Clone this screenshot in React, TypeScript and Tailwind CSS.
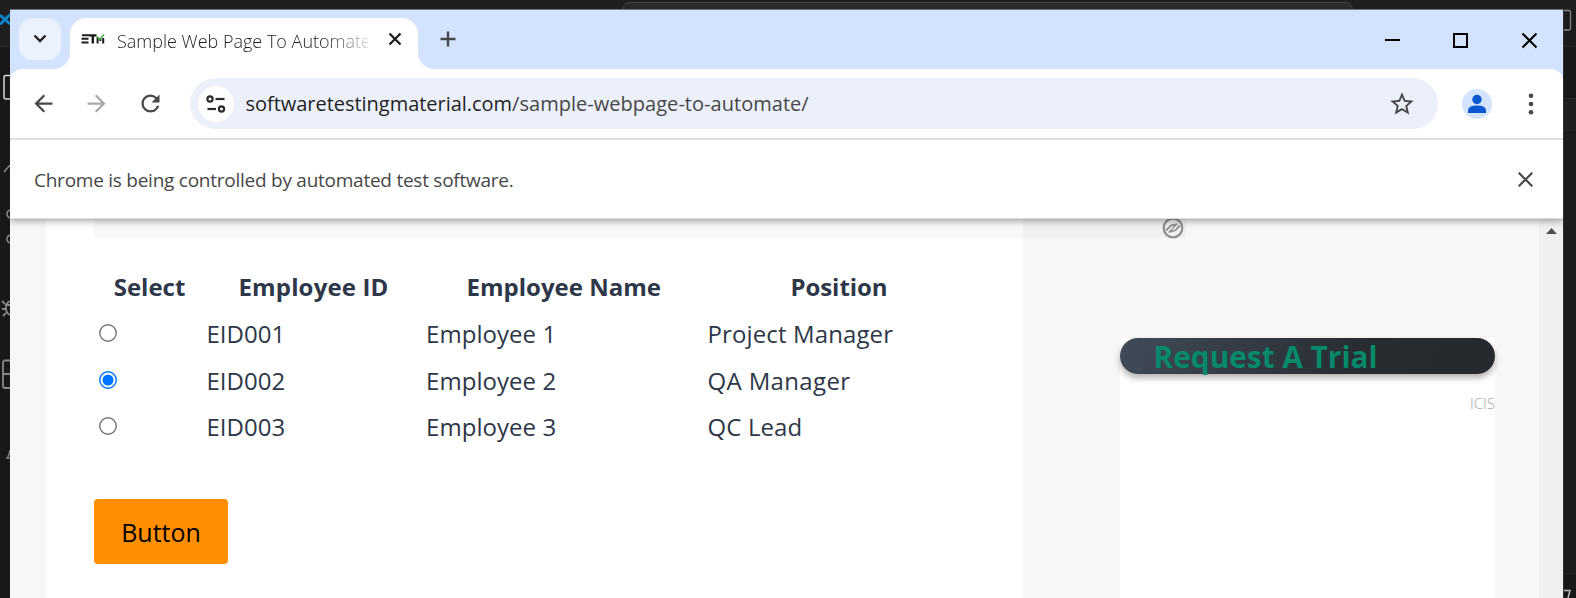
import { MdArrowBack, MdArrowForward, MdRefresh, MdStarBorder } from "react-icons/md";

type Row = { id: string; name: string; position: string; checked?: boolean };

const rows: Row[] = [
  { id: "EID001", name: "Employee 1", position: "Project Manager" },
  { id: "EID002", name: "Employee 2", position: "QA Manager", checked: true },
  { id: "EID003", name: "Employee 3", position: "QC Lead" },
];

function EditorLeftStrip() {
  return (
    <svg width="10" height="589" viewBox="0 9 10 589" fill="none">
      <rect y="9" width="10" height="37" fill="#1f1f1f" />
      <path d="M0 46.5H10" stroke="#2b2b2b" />
      <path d="M0 15L10 24M0 24.5L10 14.5" stroke="#0a84cc" strokeWidth="3" />
      <path d="M10 75.5H6a2 2 0 0 0-2 2V97a2 2 0 0 0 2 2h4" stroke="#d7d7d7" strokeWidth="1.5" />
      <path d="M4 172L10 165" stroke="#868686" strokeWidth="1.5" />
      <path d="M10 210q-3 1-3 4t3 4M10 235q-3 1-3 4t3 4" stroke="#868686" strokeWidth="1.5" />
      <path d="M10 301q-4 2-4 7t4 7M2 301l3 3M2 309h4M3 316l3-3M10 305H5" stroke="#868686" strokeWidth="1.8" />
      <path d="M10 360.5H5a2 2 0 0 0-2 2V386a2 2 0 0 0 2 2h5M3 374H10" stroke="#868686" strokeWidth="1.8" />
      <path d="M10 450q-1 6-3 8h3" stroke="#868686" strokeWidth="1.5" />
    </svg>
  );
}

function EditorRightStrip() {
  return (
    <svg width="13" height="589" viewBox="0 9 13 589" fill="none">
      <rect y="9" width="13" height="589" fill="#1c1c1c" />
      <rect y="46" width="13" height="52" fill="#181818" />
      <rect y="98" width="13" height="34" fill="#1f1f1f" />
      <path d="M0 46.5H13M0 98.5H13M0 573.5H13" stroke="#2b2b2b" />
      <path d="M0 132.5H13" stroke="#141414" />
      <rect y="574" width="13" height="24" fill="#181818" />
      <path d="M0 10.5H6a1.5 1.5 0 0 1 1.5 1.5V28.5a1.5 1.5 0 0 1-1.5 1.5H0" stroke="#868686" strokeWidth="1.3" />
      <path d="M0 590.5H7L5 598" stroke="#b8b8b8" strokeWidth="1.5" />
      <path d="M.5 9V598" stroke="#303030" />
    </svg>
  );
}

function Favicon() {
  return (
    <svg width="24" height="10" viewBox="0 0 24 10" fill="none">
      <path d="M1 1.2H8M0.5 4.8H7.5M0.5 8.5H7.5" stroke="#1c1c1c" strokeWidth="2.1" />
      <path d="M8 1.4H15.5M11.8 1V9.4" stroke="#1c1c1c" strokeWidth="2.4" />
      <path d="M16.6 9.4V3.5M19.4 7V4.5M22.2 9.4V4" stroke="#1c1c1c" strokeWidth="2" />
      <path d="M15.5 2.5L19 5.2L23 .6" stroke="#3fae3a" strokeWidth="1.5" />
    </svg>
  );
}

function TabFlare({ flip = false }: { flip?: boolean }) {
  return (
    <svg width="16" height="16" viewBox="0 0 16 16" className={flip ? "-scale-x-100 self-end" : "self-end"}>
      <path d="M0 16A16 16 0 0 0 16 0V16Z" fill="#fff" />
    </svg>
  );
}

function TabStrip() {
  return (
    <div className="flex h-[60px] border-t border-[#6f737a] bg-[#d3e3fd]">
      <div className="flex w-11 flex-none pl-[9px] pt-2">
        <button className="-mr-2 flex h-[42px] w-[42px] flex-none items-center justify-center rounded-[14px] bg-[#ebf2fe]">
          <svg width="14" height="9" viewBox="0 0 14 9" fill="none" className="-mt-0.5">
            <path d="M1.5 1.5L7 7L12.5 1.5" stroke="#1f1f1f" strokeWidth="2.4" />
          </svg>
        </button>
      </div>
      <TabFlare />
      <div className="mt-2 flex h-[51px] w-[348px] flex-none items-center rounded-t-2xl bg-white pb-[7px] pl-[11px]">
        <div className="-mt-0.5"><Favicon /></div>
        <span className="ml-3 mt-0.5 w-[251px] flex-none overflow-hidden whitespace-nowrap text-[18px] font-[350] leading-6 text-[#1f1f1f] [mask-image:linear-gradient(to_right,black_82%,transparent_104%)]">
          Sample Web Page To Automate
        </span>
        <svg width="14" height="14" viewBox="0 0 14 14" fill="none" className="-mt-0.5 ml-5 flex-none">
          <path d="M1.5 1.5L12.5 12.5M12.5 1.5L1.5 12.5" stroke="#1f1f1f" strokeWidth="2.3" />
        </svg>
      </div>
      <TabFlare flip />
      <svg width="16" height="16" viewBox="0 0 16 16" fill="none" className="ml-1.5 mt-[21px]">
        <path d="M8 .5V15.5M.5 8H15.5" stroke="#474747" strokeWidth="2.4" />
      </svg>
      <svg width="154" height="17" viewBox="0 0 154 17" fill="none" className="ml-auto mr-[25px] mt-[22px]">
        <path d="M1 8H16" stroke="#000" strokeWidth="2" />
        <rect x="70" y="2" width="13" height="13" stroke="#000" strokeWidth="2" />
        <path d="M138.5 1.5L152.5 15.5M152.5 1.5L138.5 15.5" stroke="#000" strokeWidth="2" />
      </svg>
    </div>
  );
}

function Toolbar() {
  return (
    <div className="bg-[#d3e3fd]">
      <div className="flex h-[71px] items-center rounded-t-xl border-b-2 border-[#dfdfdf] bg-white text-[#474747]">
        <MdArrowBack size={27} className="ml-[19.5px] flex-none" />
        <MdArrowForward size={27} className="ml-[26.5px] flex-none text-[#a8a8a8]" />
        <MdRefresh size={27} className="ml-[27px] flex-none" />
        <div className="ml-[26px] flex h-[51px] w-[1248px] flex-none items-center rounded-full bg-[#ebf0fa] pl-[7.5px]">
          <div className="flex h-9 w-9 flex-none items-center justify-center rounded-full bg-white">
            <svg width="20" height="18" viewBox="0 0 20 18" fill="none" stroke="#2b2b2b" strokeWidth="2.2">
              <circle cx="4" cy="4" r="2.6" />
              <path d="M9.5 4H18.5" />
              <path d="M1.5 14H10" />
              <circle cx="15.5" cy="14" r="2.6" />
            </svg>
          </div>
          <span className="ml-3 whitespace-nowrap text-[20px] leading-7 text-[#474747]">
            <span className="tracking-[-0.03px] text-[#1f1f1f]">softwaretestingmaterial.com</span>
            <span className="tracking-[0.03px]">/sample-webpage-to-automate/</span>
          </span>
          <MdStarBorder size={28} className="ml-auto mr-[22px]" />
        </div>
        <svg width="30" height="30" viewBox="0 0 30 30" className="ml-6 mt-px flex-none">
          <circle cx="15" cy="15" r="15" fill="#d3e3fd" />
          <circle cx="15" cy="10.5" r="4.7" fill="#0b57d0" />
          <path d="M6 24V21.5Q6 16.5 15 16.5T24 21.5V24Z" fill="#0b57d0" />
        </svg>
        <svg width="6" height="22" viewBox="0 0 6 22" fill="#474747" className="ml-9 flex-none">
          <circle cx="3" cy="2.7" r="2.3" />
          <circle cx="3" cy="11" r="2.3" />
          <circle cx="3" cy="19.3" r="2.3" />
        </svg>
      </div>
    </div>
  );
}

function InfoBar() {
  return (
    <div className="relative z-10 flex h-[79px] items-center justify-between border-b border-[#dcdcdc] bg-white pl-6 pr-[30px] shadow-[0_2px_7px_rgba(0,0,0,0.36)] [clip-path:inset(0_0_-12px_0)]">
      <span className="mt-0.5 text-[19px] leading-7 tracking-[-0.25px] text-[#474747]">
        Chrome is being controlled by automated test software.
      </span>
      <svg width="15" height="15" viewBox="0 0 15 15" fill="none">
        <path d="M.7 .7L14.3 14.3M14.3 .7L.7 14.3" stroke="#474747" strokeWidth="2.1" />
      </svg>
    </div>
  );
}

function Radio({ checked }: { checked?: boolean }) {
  return (
    <svg width="18" height="18" viewBox="0 0 18 18" fill="none" role="radio" aria-checked={!!checked}>
      <circle cx="9" cy="9" r="8.25" stroke={checked ? "#0075ff" : "#767676"} strokeWidth="1.4" />
      {checked && <circle cx="9" cy="9" r="5.5" fill="#0075ff" />}
    </svg>
  );
}

function EmployeeTable() {
  return (
    <div className="grid grid-cols-[112px_219px_281.5px_265px] grid-rows-[47px_47px_47px_46px] items-center text-2xl leading-9 text-[#2d3748]">
      <b className="pr-px text-center">Select</b>
      <b className="pr-1 text-center tracking-[0.15px]">Employee ID</b>
      <b className="pr-1 text-center">Employee Name</b>
      <b className="text-center tracking-[-0.05px]">Position</b>
      {rows.map((row) => (
        <div key={row.id} className="contents">
          <div className="-mt-0.5 pl-[5px]"><Radio checked={row.checked} /></div>
          <div className="pl-[0.5px]">{row.id}</div>
          <div className="pl-px tracking-[0.05px]">{row.name}</div>
          <div className={row.checked ? "pl-px tracking-[0.35px]" : "pl-px tracking-[0.12px]"}>{row.position}</div>
        </div>
      ))}
    </div>
  );
}

function Page() {
  return (
    <div className="relative flex h-[379px] bg-[#f7f7f7]">
      <div className="absolute left-[84px] top-0 h-[19px] w-[1092px] bg-black/[0.028]">
        <svg width="22" height="22" viewBox="0 0 22 22" fill="none" stroke="#909090" className="absolute -top-0.5 left-[1068px]">
          <circle cx="11" cy="11" r="9.3" strokeWidth="2.3" />
          <path d="M4 13.5L8.5 9Q10 7.400 12.5 8M9.500 14Q12 14.600 13.500 13L18 8.500" strokeWidth="1.8" />
          <path d="M6.500 15.500L10 12.500L12 9.500L15.500 6.500" strokeWidth="1.3" />
          <circle cx="13" cy="8" r="1.5" fill="#909090" stroke="none" />
          <circle cx="9" cy="14" r="1.5" fill="#909090" stroke="none" />
        </svg>
      </div>
      <main className="ml-9 w-[977px] flex-none bg-white pl-12 pt-11">
        <EmployeeTable />
        <button className="mt-[49px] flex h-[65px] w-[134px] items-center justify-center rounded bg-[#ff8f00] pt-px text-[25px] leading-9 text-black">
          Button
        </button>
      </main>
      <aside className="ml-[97px] mt-[119px] w-[375px] flex-none bg-white">
        <div className="h-9 rounded-full bg-linear-[120deg] from-[#414b59] via-[#282b30] via-65% to-[#25282c] pl-[33.5px] text-[29.8px] font-bold leading-[37px] text-[#04896b] shadow-[0_4px_6px_rgba(0,0,0,0.3)]">
          Request A Trial
        </div>
        <div className="mt-[17px] text-right text-[15px] font-light leading-6 text-[#a5a5a5]">ICIS</div>
      </aside>
      <div className="ml-auto flex w-6 justify-center bg-[#f0f0f0] pt-[9px]">
        <svg width="11" height="6" viewBox="0 0 11 6"><path d="M0 6L5.5 0L11 6Z" fill="#505050" /></svg>
      </div>
    </div>
  );
}

export default function App() {
  return (
    <div className="grid h-[598px] w-[1576px] grid-cols-[10px_1553px_13px] grid-rows-[9px_589px] overflow-hidden bg-[#181818] font-['Open_Sans','Noto_Sans',sans-serif]">
      <div className="col-span-3 overflow-hidden bg-[#1f1f1f] pl-[622px] pt-0.5">
        <div className="h-8 w-[731px] rounded-lg border border-[#454545] bg-[#292929]" />
      </div>
      <EditorLeftStrip />
      <div className="flex flex-col overflow-hidden">
        <TabStrip />
        <Toolbar />
        <InfoBar />
        <Page />
      </div>
      <EditorRightStrip />
    </div>
  );
}
